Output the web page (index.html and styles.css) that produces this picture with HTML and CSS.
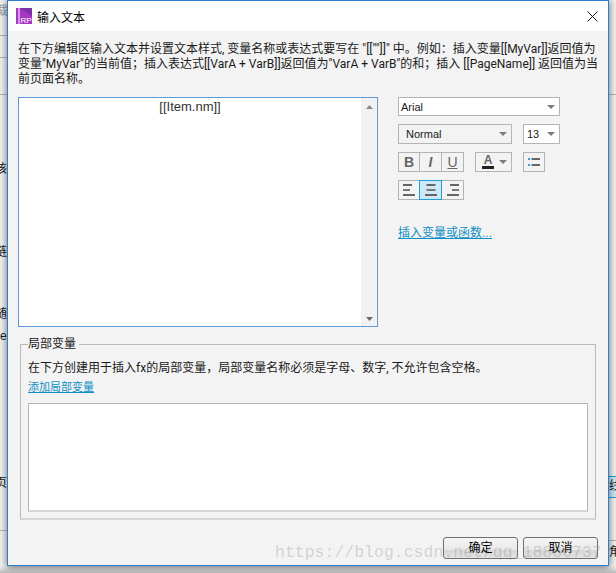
FILE: index.html
```html
<!DOCTYPE html>
<html lang="zh-CN">
<head>
    <meta charset="UTF-8">
    <title>输入文本</title>
    <link rel="stylesheet" href="styles.css">
</head>
<body>
    <!-- bits of the app window behind the dialog -->
    <div class="behind">
        <span class="scrap scrap-a">裁</span>
        <span class="scrap scrap-b">该</span>
        <span class="scrap scrap-c">链</span>
        <span class="scrap scrap-d">随</span>
        <span class="scrap scrap-e">e</span>
        <span class="scrap scrap-f">页</span>
        <span class="row-selected"></span>
        <span class="scrap scrap-g">线</span>
        <span class="scrap scrap-h">角</span>
        <i class="rule rule-a"></i>
        <i class="rule rule-b"></i>
        <i class="rule rule-c"></i>
        <i class="rule rule-d"></i>
        <i class="rule rule-e"></i>
        <i class="rule rule-f"></i>
    </div>

    <div class="dialog">
        <div class="titlebar">
            <svg class="app-icon" width="16" height="16" viewBox="0 0 16 16">
                <rect width="2.5" height="16" fill="#a537c4"/>
                <rect x="3.5" width="12.5" height="16" fill="#a537c4"/>
                <path d="M3.5 0H16V8Z" fill="#7f2fa8"/>
                <text x="4.5" y="15" class="app-icon-text">RP</text>
            </svg>
            <span class="title">输入文本</span>
            <svg class="close" width="11" height="11" viewBox="0 0 11 11">
                <path d="M0.5 0.5L10.5 10.5M10.5 0.5L0.5 10.5" stroke="#1a1a1a" stroke-width="1" fill="none"/>
            </svg>
        </div>

        <div class="content">
            <p class="intro">在下方编辑区输入文本并设置文本样式, 变量名称或表达式要写在 "[[""]]" 中。例如：插入变量[[MyVar]]返回值为<br>变量"MyVar"的当前值；插入表达式[[VarA + VarB]]返回值为"VarA + VarB"的和；插入 [[PageName]] 返回值为当<br>前页面名称。</p>

            <div class="editor-row">
                <div class="editor">
                    <div class="editor-text">[[Item.nm]]</div>
                    <div class="scrollbar">
                        <svg width="7" height="4" viewBox="0 0 7 4"><path d="M0 4L3.5 0L7 4Z" fill="#8a8a8a"/></svg>
                        <svg width="7" height="4" viewBox="0 0 7 4"><path d="M0 0L7 0L3.5 4Z" fill="#6a6a6a"/></svg>
                    </div>
                </div>

                <div class="tools">
                    <div class="select select-font">
                        <span>Arial</span>
                        <i class="caret"></i>
                    </div>
                    <div class="tool-row">
                        <div class="select select-style">
                            <span>Normal</span>
                            <i class="caret"></i>
                        </div>
                        <div class="select select-size">
                            <span>13</span>
                            <i class="caret"></i>
                        </div>
                    </div>
                    <div class="tool-row">
                        <div class="btn-group">
                            <div class="tool-btn bold">B</div>
                            <div class="tool-btn italic">I</div>
                            <div class="tool-btn underline">U</div>
                        </div>
                        <div class="color-btn">
                            <span class="color-a">A</span>
                            <i class="caret"></i>
                        </div>
                        <div class="tool-btn list-btn">
                            <svg width="12" height="10" viewBox="0 0 12 10">
                                <rect x="0" y="1" width="2" height="2" fill="#29a3dc"/>
                                <rect x="0" y="7" width="2" height="2" fill="#29a3dc"/>
                                <rect x="3.5" y="1" width="8.5" height="2" fill="#666"/>
                                <rect x="3.5" y="7" width="8.5" height="2" fill="#666"/>
                            </svg>
                        </div>
                    </div>
                    <div class="btn-group">
                        <div class="tool-btn">
                            <svg width="12" height="12" viewBox="0 0 12 12">
                                <rect y="0" width="9" height="2" fill="#666"/>
                                <rect y="5" width="7" height="2" fill="#777"/>
                                <rect y="10" width="12" height="2" fill="#666"/>
                            </svg>
                        </div>
                        <div class="tool-btn active">
                            <svg width="12" height="12" viewBox="0 0 12 12">
                                <rect x="1.5" y="0" width="9" height="2" fill="#666"/>
                                <rect x="1.5" y="5" width="9" height="2" fill="#777"/>
                                <rect y="10" width="12" height="2" fill="#666"/>
                            </svg>
                        </div>
                        <div class="tool-btn">
                            <svg width="12" height="12" viewBox="0 0 12 12">
                                <rect x="3" y="0" width="9" height="2" fill="#666"/>
                                <rect x="5" y="5" width="7" height="2" fill="#777"/>
                                <rect y="10" width="12" height="2" fill="#666"/>
                            </svg>
                        </div>
                    </div>
                    <a class="link insert-link">插入变量或函数...</a>
                </div>
            </div>

            <fieldset class="locals">
                <legend>局部变量</legend>
                <p class="locals-text">在下方创建用于插入fx的局部变量，局部变量名称必须是字母、数字, 不允许包含空格。</p>
                <a class="link">添加局部变量</a>
                <div class="locals-box"></div>
            </fieldset>

            <div class="actions">
                <div class="action">确定</div>
                <div class="action">取消</div>
            </div>
        </div>
    </div>

    <div class="watermark">https://blog.csdn.net/qq_18880737</div>
</body>
</html>
```

FILE: styles.css
```css
* {
    margin: 0;
    padding: 0;
    box-sizing: border-box;
}

body {
    position: relative;
    width: 616px;
    height: 573px;
    overflow: hidden;
    background: linear-gradient(#f0f0f0 566px, #b9b9b9 573px);
    font-family: "Liberation Sans", "Noto Sans CJK SC", sans-serif;
    font-size: 12px;
    color: #1a1a1a;
}

/* app window showing round the dialog */
.behind {
    position: absolute;
    inset: 0;
}

.scrap {
    position: absolute;
    font-size: 12px;
    line-height: 14px;
}

.scrap-a { left: -4px; top: 4px; color: #999; }
.scrap-b { left: -5px; top: 162px; }
.scrap-c { left: -5px; top: 245px; }
.scrap-d { left: -5px; top: 307px; }
.scrap-e { left: 0; top: 329px; }
.scrap-f { left: -5px; top: 476px; }
.scrap-g { left: 609px; top: 479px; }
.scrap-h { left: 609px; top: 545px; }

.row-selected {
    position: absolute;
    left: 608px;
    top: 476px;
    width: 8px;
    height: 22px;
    border-top: 1px solid #2b9bd0;
    border-bottom: 1px solid #2b9bd0;
    background-color: #cfe8f5;
}

.rule {
    position: absolute;
    height: 1px;
    background-color: #b5b5b5;
}

.rule-a { left: 0; top: 35px; width: 7px; }
.rule-b { left: 0; top: 57px; width: 7px; }
.rule-c { left: 0; top: 94px; width: 7px; }
.rule-d { left: 0; top: 530px; width: 7px; }
.rule-e { left: 609px; top: 94px; width: 7px; }
.rule-f { left: 609px; top: 540px; width: 7px; }

.dialog {
    position: relative;
    width: 602px;
    height: 566px;
    margin-left: 7px;
    border: 1px solid #2b7fd0;
    background-color: #f3f3f3;
    box-shadow: -3px 0 6px rgba(0, 0, 0, 0.18), 3px 0 6px rgba(0, 0, 0, 0.18), 0 3px 6px rgba(0, 0, 0, 0.25);
}

.titlebar {
    display: flex;
    align-items: center;
    height: 30px;
    padding: 0 10px 0 8px;
    background-color: #fff;
}

.app-icon {
    flex: none;
}

.app-icon-text {
    font-family: "Liberation Sans", sans-serif;
    font-size: 8px;
    fill: #fff;
}

.title {
    margin-left: 5px;
    font-size: 12px;
    color: #000;
    flex-grow: 1;
}

.content {
    padding: 11px 10px 0;
}

.intro {
    height: 55px;
    white-space: nowrap;
    font-family: Roboto, "Noto Sans CJK SC", sans-serif;
    line-height: 15px;
    font-size: 12px;
}

.editor-row {
    display: flex;
    gap: 20px;
    height: 230px;
}

.editor {
    display: flex;
    width: 360px;
    border: 1px solid #5b9bdc;
    background-color: #fff;
}

.editor-text {
    flex-grow: 1;
    text-align: center;
    font-size: 13px;
    line-height: 18px;
    color: #333;
}

.scrollbar {
    display: flex;
    flex-direction: column;
    justify-content: space-between;
    align-items: center;
    width: 16px;
    padding: 7px 0 5px;
    background-color: #f1f1f1;
}

.tools {
    display: flex;
    flex-direction: column;
    align-items: flex-start;
    gap: 8px;
}

.tool-row {
    display: flex;
    gap: 11px;
}

.select {
    display: flex;
    align-items: center;
    justify-content: space-between;
    height: 20px;
    padding: 0 4px 0 2px;
    border: 1px solid #b4b4b4;
    background-color: #fff;
    font-size: 11px;
}

.select-font {
    width: 162px;
    height: 19px;
}

.select-style {
    width: 114px;
    padding-left: 7px;
    background-color: #f3f3f3;
}

.select-size {
    width: 37px;
    padding-left: 3px;
}

.caret {
    display: block;
    width: 0;
    height: 0;
    border-left: 4px solid transparent;
    border-right: 4px solid transparent;
    border-top: 4px solid #7c7c7c;
}

.btn-group {
    display: flex;
}

.tool-btn {
    display: flex;
    align-items: center;
    justify-content: center;
    width: 22px;
    height: 20px;
    border: 1px solid #b4b4b4;
    background-color: #f3f3f3;
    font-size: 14px;
    color: #666;
}

.btn-group .tool-btn {
    width: 23px;
}

.btn-group .tool-btn:first-child {
    width: 22px;
}

.btn-group .tool-btn + .tool-btn {
    margin-left: -1px;
}

.bold {
    font-weight: bold;
}

.italic {
    font-style: italic;
    font-weight: bold;
}

.underline {
    text-decoration: underline;
}

.tool-btn.active {
    position: relative;
    z-index: 1;
    border-color: #1c9fd8;
    background-color: #cde8f6;
}

.color-btn {
    display: flex;
    align-items: center;
    justify-content: space-between;
    width: 37px;
    height: 20px;
    padding: 0 4px 0 6px;
    border: 1px solid #b4b4b4;
}

.color-a {
    width: 12px;
    height: 14px;
    border-bottom: 3px solid #222;
    font-size: 12px;
    font-weight: bold;
    line-height: 11px;
    text-align: center;
    color: #666;
}

.link {
    color: #0f8fc4;
    text-decoration: underline;
    font-size: 12px;
}

.insert-link {
    margin-top: 15px;
}

.locals {
    width: 576px;
    height: 183px;
    margin: 10px 0 0 2px;
    padding: 0 7px;
    border: 1px solid #b9b9b9;
    border-bottom: 2px solid #d6d6d6;
}

.locals legend {
    padding-right: 3px;
    font-size: 12px;
    line-height: 14px;
}

.locals-text {
    margin-top: 10px;
    font-family: Roboto, "Noto Sans CJK SC", sans-serif;
    line-height: 15px;
}

.locals .link {
    display: block;
    margin-top: 4px;
    font-size: 11px;
    line-height: 15px;
}

.locals-box {
    height: 109px;
    margin-top: 8px;
    border: 1px solid #b4b4b4;
    border-bottom: 2px solid #d6d6d6;
    background-color: #fff;
}

.actions {
    display: flex;
    justify-content: flex-end;
    gap: 5px;
    margin-top: 17px;
}

.action {
    width: 75px;
    height: 22px;
    border: 1px solid #707070;
    border-radius: 3px;
    background: linear-gradient(#f5f5f5, #e9e9e9 60%, #d6d6d6 60%, #e4e4e4);
    text-align: center;
    line-height: 20px;
    font-size: 12px;
    color: #000;
}

.watermark {
    position: absolute;
    left: 275px;
    top: 543px;
    font-family: "Liberation Mono", monospace;
    font-size: 16.5px;
    line-height: 20px;
    white-space: nowrap;
    color: rgba(120, 120, 110, 0.28);
}
```
